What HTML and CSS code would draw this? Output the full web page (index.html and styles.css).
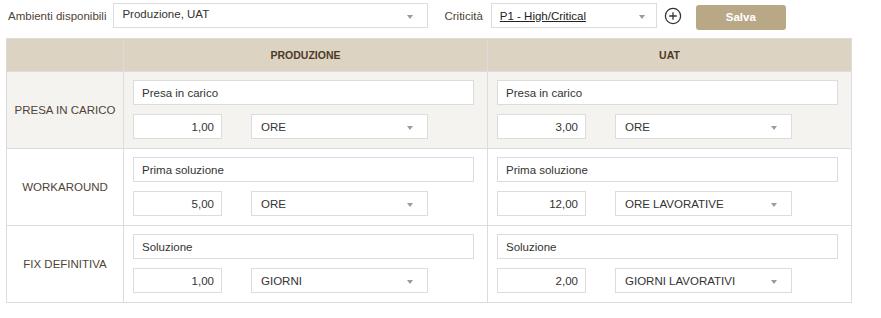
FILE: index.html
```html
<!DOCTYPE html>
<html lang="it">

<head>
    <meta charset="UTF-8">
    <meta name="viewport" content="width=device-width, initial-scale=1.0">
    <title>SLA ambienti</title>
    <link rel="stylesheet" href="styles.css">
</head>

<body>
    <div class="filter-bar">
        <label class="filter-label">Ambienti disponibili</label>
        <div class="select-box env-select">
            <span class="select-value">Produzione, UAT</span>
            <span class="caret"></span>
        </div>

        <label class="filter-label crit-label">Criticità</label>
        <div class="select-box crit-select">
            <span class="select-value link-value">P1 - High/Critical</span>
            <span class="caret"></span>
        </div>

        <button class="icon-btn" title="Aggiungi">
            <svg width="18" height="18" viewBox="0 0 18 18">
                <circle cx="9" cy="9" r="7.6" fill="none" stroke="#333" stroke-width="1.3"/>
                <path d="M9 5.2v7.6M5.2 9h7.6" stroke="#333" stroke-width="1.3"/>
            </svg>
        </button>

        <button class="save-btn">Salva</button>
    </div>

    <table class="sla-table">
        <colgroup>
            <col class="col-label">
            <col class="col-env">
            <col class="col-env">
        </colgroup>
        <thead>
            <tr>
                <th></th>
                <th>PRODUZIONE</th>
                <th>UAT</th>
            </tr>
        </thead>
        <tbody>
            <tr class="row-active">
                <td class="row-label">PRESA IN CARICO</td>
                <td>
                    <div class="field text-field">Presa in carico</div>
                    <div class="field-line">
                        <div class="field num-field">1,00</div>
                        <div class="select-box unit-select"><span class="select-value">ORE</span><span class="caret"></span></div>
                    </div>
                </td>
                <td>
                    <div class="field text-field">Presa in carico</div>
                    <div class="field-line">
                        <div class="field num-field">3,00</div>
                        <div class="select-box unit-select"><span class="select-value">ORE</span><span class="caret"></span></div>
                    </div>
                </td>
            </tr>
            <tr>
                <td class="row-label">WORKAROUND</td>
                <td>
                    <div class="field text-field">Prima soluzione</div>
                    <div class="field-line">
                        <div class="field num-field">5,00</div>
                        <div class="select-box unit-select"><span class="select-value">ORE</span><span class="caret"></span></div>
                    </div>
                </td>
                <td>
                    <div class="field text-field">Prima soluzione</div>
                    <div class="field-line">
                        <div class="field num-field">12,00</div>
                        <div class="select-box unit-select"><span class="select-value">ORE LAVORATIVE</span><span class="caret"></span></div>
                    </div>
                </td>
            </tr>
            <tr>
                <td class="row-label">FIX DEFINITIVA</td>
                <td>
                    <div class="field text-field">Soluzione</div>
                    <div class="field-line">
                        <div class="field num-field">1,00</div>
                        <div class="select-box unit-select"><span class="select-value">GIORNI</span><span class="caret"></span></div>
                    </div>
                </td>
                <td>
                    <div class="field text-field">Soluzione</div>
                    <div class="field-line">
                        <div class="field num-field">2,00</div>
                        <div class="select-box unit-select"><span class="select-value">GIORNI LAVORATIVI</span><span class="caret"></span></div>
                    </div>
                </td>
            </tr>
        </tbody>
    </table>
</body>

</html>
```

FILE: styles.css
```css
body {
    font-family: "Liberation Sans", Arial, sans-serif;
    font-size: 11.5px;
    margin: 0;
    padding: 3px 6px;
    background-color: #ffffff;
    color: #333333;
}

.filter-bar {
    display: flex;
    align-items: center;
    height: 25px;
}

.filter-label {
    color: #4f4336;
    margin-left: 2px;
    margin-right: 7px;
}

.crit-label {
    margin-left: 16px;
    margin-right: 8px;
}

.select-box {
    display: flex;
    align-items: center;
    justify-content: space-between;
    box-sizing: border-box;
    height: 25px;
    border: 1px solid #dcdcdc;
    background-color: #ffffff;
    padding: 0 14px 0 8px;
}

.select-value {
    color: #333333;
}

.env-select {
    width: 315px;
    padding-left: 8px;
}

.env-select .select-value {
    margin-top: -3px;
}

.crit-select {
    width: 166px;
    padding-right: 11px;
}

.link-value {
    text-decoration: underline;
    color: #222222;
}

.caret {
    width: 0;
    height: 0;
    border-left: 3.5px solid transparent;
    border-right: 3.5px solid transparent;
    border-top: 4px solid #9a9a9a;
    margin-top: 2px;
}

.icon-btn {
    background: none;
    border: none;
    padding: 0;
    margin-left: 7px;
    width: 18px;
    height: 18px;
    cursor: pointer;
}

.save-btn {
    margin-left: 14px;
    margin-top: 3px;
    width: 90px;
    height: 25px;
    border: none;
    border-radius: 3px;
    background-color: #b9a886;
    color: #ffffff;
    font-family: inherit;
    font-size: 11.5px;
    font-weight: bold;
    cursor: pointer;
}

.sla-table {
    margin-top: 10px;
    border-collapse: collapse;
    table-layout: fixed;
    width: 846px;
}

.col-label {
    width: 117px;
}

.col-env {
    width: 364px;
}

.sla-table th,
.sla-table td {
    border: 1px solid #dcdcdc;
}

.sla-table th {
    height: 32px;
    padding: 0;
    background-color: #ddd3c2;
    color: #4d3a26;
    font-size: 10.5px;
    font-weight: bold;
}

.sla-table td {
    padding: 8px 9px 9px 9px;
    vertical-align: top;
}

.sla-table td.row-label {
    text-align: center;
    vertical-align: middle;
    color: #4f4336;
    padding: 0;
}

.row-active td {
    background-color: #f5f3ef;
}

.field {
    box-sizing: border-box;
    height: 25px;
    border: 1px solid #dcdcdc;
    background-color: #ffffff;
    display: flex;
    align-items: center;
}

.text-field {
    width: 341px;
    padding-left: 8px;
}

.field-line {
    display: flex;
    gap: 29px;
    margin-top: 9px;
}

.num-field {
    width: 89px;
    justify-content: flex-end;
    padding-right: 7px;
}

.unit-select {
    width: 177px;
    padding-left: 9px;
}
```
